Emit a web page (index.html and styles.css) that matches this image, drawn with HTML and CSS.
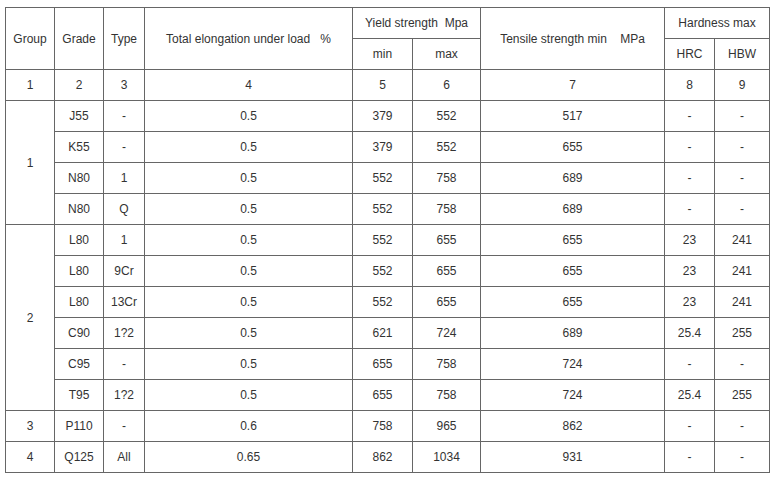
FILE: index.html
```html
<!DOCTYPE html>
<html>
<head>
<meta charset="utf-8">
<link rel="stylesheet" href="styles.css">
</head>
<body>
<table class="spec">
  <colgroup>
    <col class="c-group"><col class="c-grade"><col class="c-type"><col class="c-elong">
    <col class="c-ymin"><col class="c-ymax"><col class="c-tens"><col class="c-hrc"><col class="c-hbw">
  </colgroup>
  <tr>
    <td rowspan="2">Group</td>
    <td rowspan="2">Grade</td>
    <td rowspan="2">Type</td>
    <td rowspan="2">Total elongation under load&nbsp;&nbsp; %</td>
    <td colspan="2">Yield strength&nbsp; Mpa</td>
    <td rowspan="2">Tensile strength min&nbsp;&nbsp;&nbsp; MPa</td>
    <td colspan="2">Hardness max</td>
  </tr>
  <tr>
    <td>min</td><td>max</td><td>HRC</td><td>HBW</td>
  </tr>
  <tr><td>1</td><td>2</td><td>3</td><td>4</td><td>5</td><td>6</td><td>7</td><td>8</td><td>9</td></tr>
  <tr><td rowspan="4">1</td><td>J55</td><td>-</td><td>0.5</td><td>379</td><td>552</td><td>517</td><td>-</td><td>-</td></tr>
  <tr><td>K55</td><td>-</td><td>0.5</td><td>379</td><td>552</td><td>655</td><td>-</td><td>-</td></tr>
  <tr><td>N80</td><td>1</td><td>0.5</td><td>552</td><td>758</td><td>689</td><td>-</td><td>-</td></tr>
  <tr><td>N80</td><td>Q</td><td>0.5</td><td>552</td><td>758</td><td>689</td><td>-</td><td>-</td></tr>
  <tr><td rowspan="6">2</td><td>L80</td><td>1</td><td>0.5</td><td>552</td><td>655</td><td>655</td><td>23</td><td>241</td></tr>
  <tr><td>L80</td><td>9Cr</td><td>0.5</td><td>552</td><td>655</td><td>655</td><td>23</td><td>241</td></tr>
  <tr><td>L80</td><td>13Cr</td><td>0.5</td><td>552</td><td>655</td><td>655</td><td>23</td><td>241</td></tr>
  <tr><td>C90</td><td>1?2</td><td>0.5</td><td>621</td><td>724</td><td>689</td><td>25.4</td><td>255</td></tr>
  <tr><td>C95</td><td>-</td><td>0.5</td><td>655</td><td>758</td><td>724</td><td>-</td><td>-</td></tr>
  <tr><td>T95</td><td>1?2</td><td>0.5</td><td>655</td><td>758</td><td>724</td><td>25.4</td><td>255</td></tr>
  <tr><td>3</td><td>P110</td><td>-</td><td>0.6</td><td>758</td><td>965</td><td>862</td><td>-</td><td>-</td></tr>
  <tr><td>4</td><td>Q125</td><td>All</td><td>0.65</td><td>862</td><td>1034</td><td>931</td><td>-</td><td>-</td></tr>
</table>
</body>
</html>
```
FILE: styles.css
```css
html, body {
  margin: 0;
  background: #ffffff;
}
body {
  padding: 7px 0 0 5px;
  font-family: "Liberation Sans", Arial, sans-serif;
  font-size: 12px;
  color: #333333;
}
.spec {
  border-collapse: collapse;
  table-layout: fixed;
  width: 764px;
}
.spec td {
  border: 1px solid #666666;
  height: 30px;
  padding: 0;
  text-align: center;
  vertical-align: middle;
  line-height: 14px;
}
.c-group { width: 49px; }
.c-grade { width: 49px; }
.c-type { width: 41px; }
.c-elong { width: 208px; }
.c-ymin { width: 60px; }
.c-ymax { width: 68px; }
.c-tens { width: 184px; }
.c-hrc { width: 50px; }
.c-hbw { width: 55px; }
```
